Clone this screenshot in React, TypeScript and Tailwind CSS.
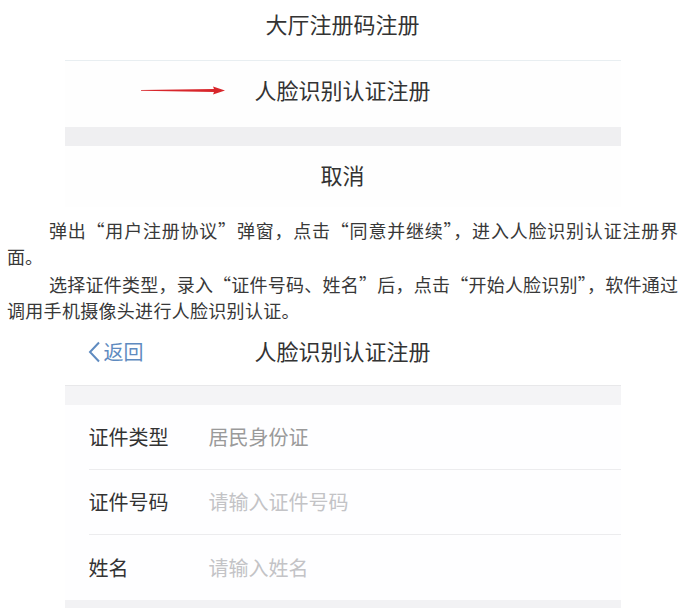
export default function App() {
  const rows = [
    { label: "证件类型", value: "居民身份证", color: "text-[#9a9a9a]" },
    { label: "证件号码", value: "请输入证件号码", color: "text-[#c3c3c6]" },
    { label: "姓名", value: "请输入姓名", color: "text-[#c3c3c6]" },
  ];

  return (
    <div lang="zh-CN" className="w-[685px] h-[608px] overflow-hidden bg-white text-[#333] font-['Noto_Sans_CJK_SC',sans-serif]">
      {/* ── first screenshot: action sheet ── */}
      <section className="w-[556px] mx-auto">
        <div className="h-[61px] pt-[9px] text-center text-[22px] leading-[28px] border-b border-[#e8eef1]">
          大厅注册码注册
        </div>
        <div className="relative h-[66px] pt-[14px] bg-[#fefefe] text-center text-[22px] leading-[28px]">
          {/* red annotation arrow */}
          <svg className="absolute left-[76px] top-[25px]" width="84" height="9" viewBox="0 0 84 9">
            <polygon points="0,4.1 73,2.9 72,0.6 84,4.5 72,8.4 73,6.1 0,4.8" fill="#d8262b" />
          </svg>
          人脸识别认证注册
        </div>
        <div className="h-[19px] bg-[#efeff1]" />
        <div className="h-[61px] pt-[14px] bg-[#fefefe] text-center text-[22px] leading-[28px]">取消</div>
      </section>

      {/* ── article text ── */}
      <article className="px-[7px] pt-[10px] text-[18px] leading-[26px] text-[#383838]">
        <div>
          <div className="pl-[42px] text-justify [text-align-last:justify]">
            弹出“用户注册协议”弹窗，点击“同意并继续”，进入人脸识别认证注册界
          </div>
          <div>面。</div>
        </div>
        <div className="mt-[2px]">
          <div className="pl-[42px] text-justify [text-align-last:justify]">
            选择证件类型，录入“证件号码、姓名”后，点击“开始人脸识别”，软件通过
          </div>
          <div className="tracking-[0.3px]">调用手机摄像头进行人脸识别认证。</div>
        </div>
      </article>

      {/* ── second screenshot: face registration form ── */}
      <section className="w-[556px] mx-auto">
        <div className="relative h-[63px] pt-[13px] text-center text-[22px] leading-[28px] border-b border-[#e8e8ea]">
          <div className="absolute left-[22px] top-[17px] flex items-center gap-[3px] text-[20px] leading-[24px] text-[#5f8bc0]">
            <svg width="14" height="22" viewBox="0 0 14 22" fill="none">
              <path d="M12 1.5 L3 11 L12 20.5" stroke="#5f8bc0" strokeWidth="2" />
            </svg>
            <span>返回</span>
          </div>
          人脸识别认证注册
        </div>
        <div className="h-[19px] bg-[#f4f4f6]" />
        <div className="bg-[#fefeff] pl-[24px]">
          {rows.map((row, i) => (
            <div
              key={row.label}
              className={`h-[65px] flex items-center text-[20px] ${i < rows.length - 1 ? "border-b border-[#ececee]" : ""}`}
            >
              <span className="w-[120px] text-[#333]">{row.label}</span>
              <span className={row.color}>{row.value}</span>
            </div>
          ))}
        </div>
        <div className="h-[8px] bg-[#f2f2f4]" />
      </section>
    </div>
  );
}
